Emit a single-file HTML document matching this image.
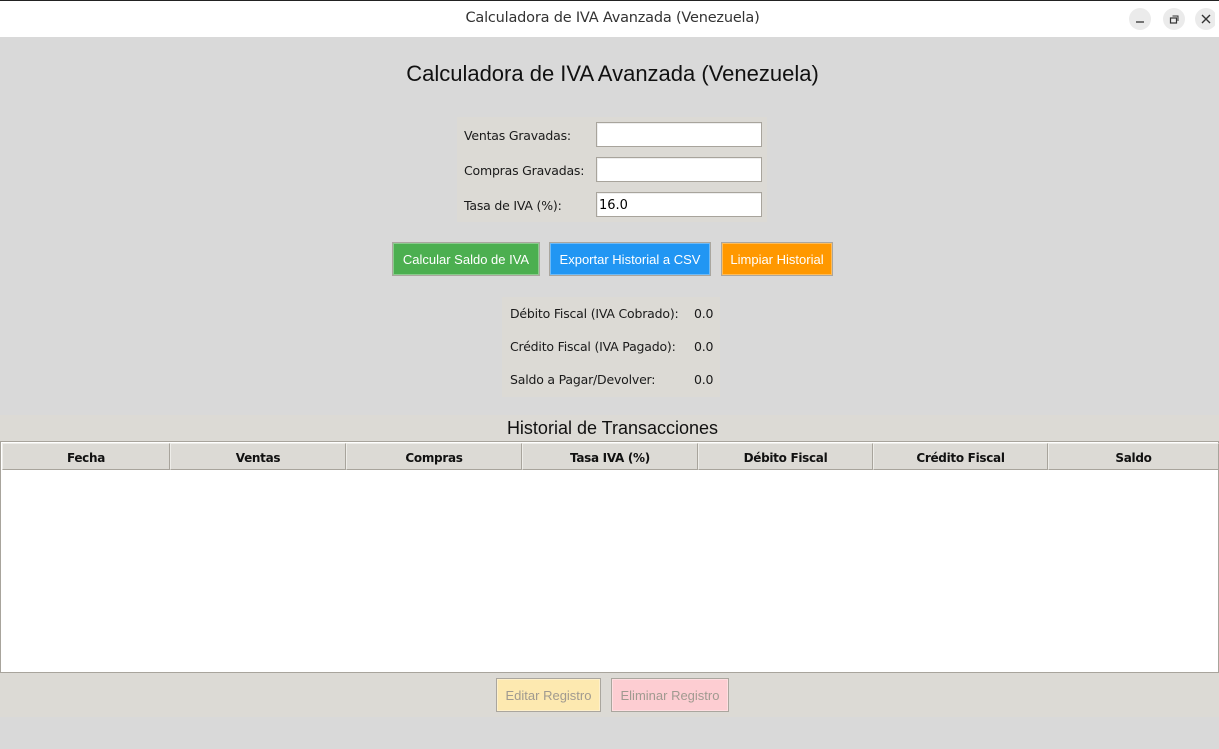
<!DOCTYPE html>
<html><head><meta charset="utf-8"><style>
*{margin:0;padding:0;box-sizing:border-box}
body{width:1219px;height:749px;background:#d9d9d9;position:relative;overflow:hidden;font-family:"DejaVu Sans","Liberation Sans",sans-serif}
.a{position:absolute}
.lbl{font-size:12.5px;color:#1a1a1a;letter-spacing:-0.2px}
.ent{background:#fff;border:1px solid #a8a49c;box-shadow:inset 1px 1px 0 #eee;font-size:13px;padding:5px 2px 0;color:#000}
.btn{font-family:"Liberation Sans",sans-serif;font-size:13px;color:#fff;display:flex;align-items:center;justify-content:center;border:1px solid #aaa69e;outline:1px solid rgba(255,255,255,0.35);outline-offset:-2px}
.th{top:443px;height:27px;background:#dcdad5;border:1px solid #a8a49c;border-top-color:#eeede9;border-left-color:#eeede9;font-weight:bold;font-size:12px;letter-spacing:-0.3px;color:#111;display:flex;align-items:center;justify-content:center;padding-top:3px}
</style></head><body>
<div class="a" style="left:0;top:0;width:1219px;height:37px;background:#fff;border-top:1px solid #222"></div>
<div class="a" style="left:0;top:10px;width:1225px;text-align:center;font-size:14.5px;color:#333;font-family:'DejaVu Sans',sans-serif;letter-spacing:-0.2px">Calculadora de IVA Avanzada (Venezuela)</div>
<svg class="a" style="left:1129px;top:8px" width="86" height="22">
<circle cx="11" cy="11" r="11" fill="#ebebeb"/><line x1="7" y1="14" x2="15" y2="14" stroke="#333" stroke-width="1.3"/>
<circle cx="45" cy="11" r="11" fill="#ebebeb"/><rect x="41.5" y="10" width="6" height="5" fill="none" stroke="#333" stroke-width="1.2"/><path d="M43.5 8h5.5v5" fill="none" stroke="#333" stroke-width="1"/>
<circle cx="77" cy="11" r="11" fill="#ebebeb"/><path d="M73 7l8 8M81 7l-8 8" stroke="#333" stroke-width="1.4"/>
</svg>
<div class="a" style="left:0;top:61px;width:1225px;text-align:center;font-family:'Liberation Sans',sans-serif;font-size:22px;color:#111">Calculadora de IVA Avanzada (Venezuela)</div>

<div class="a" style="left:457px;top:117px;width:310px;height:105px;background:#dcdad5"></div>
<div class="a lbl" style="left:464px;top:128px">Ventas Gravadas:</div>
<div class="a lbl" style="left:464px;top:163px">Compras Gravadas:</div>
<div class="a lbl" style="left:464px;top:198px">Tasa de IVA (%):</div>
<div class="a ent" style="left:596px;top:122px;width:166px;height:25px"></div>
<div class="a ent" style="left:596px;top:157px;width:166px;height:25px"></div>
<div class="a ent" style="left:596px;top:192px;width:166px;height:25px">16.0</div>

<div class="a btn" style="left:392px;top:242px;width:148px;height:34px;background:#4caf50">Calcular Saldo de IVA</div>
<div class="a btn" style="left:549px;top:242px;width:162px;height:34px;background:#2196f3">Exportar Historial a CSV</div>
<div class="a btn" style="left:721px;top:242px;width:112px;height:34px;background:#ff9800">Limpiar Historial</div>

<div class="a" style="left:502px;top:297px;width:218px;height:100px;background:#dcdad5"></div>
<div class="a lbl" style="left:510px;top:306px">Débito Fiscal (IVA Cobrado):</div>
<div class="a lbl" style="left:510px;top:339px">Crédito Fiscal (IVA Pagado):</div>
<div class="a lbl" style="left:510px;top:372px">Saldo a Pagar/Devolver:</div>
<div class="a lbl" style="left:694px;top:306px">0.0</div>
<div class="a lbl" style="left:694px;top:339px">0.0</div>
<div class="a lbl" style="left:694px;top:372px">0.0</div>

<div class="a" style="left:0;top:415px;width:1219px;height:302px;background:#dcdad5"></div>
<div class="a" style="left:0;top:418px;width:1225px;text-align:center;font-family:'Liberation Sans',sans-serif;font-size:18px;color:#111">Historial de Transacciones</div>
<div class="a" style="left:0;top:441px;width:1219px;height:232px;background:#fff;border:1px solid #a8a49c"></div>
<div class="a th" style="left:2px;width:168px">Fecha</div>
<div class="a th" style="left:170px;width:176px">Ventas</div>
<div class="a th" style="left:346px;width:176px">Compras</div>
<div class="a th" style="left:522px;width:176px">Tasa IVA (%)</div>
<div class="a th" style="left:698px;width:175px">Débito Fiscal</div>
<div class="a th" style="left:873px;width:175px">Crédito Fiscal</div>
<div class="a th" style="left:1048px;width:171px">Saldo</div>

<div class="a btn" style="left:496px;top:678px;width:105px;height:34px;background:#fde9b0;color:#a09a90">Editar Registro</div>
<div class="a btn" style="left:611px;top:678px;width:118px;height:34px;background:#fdcdd2;color:#a09a90">Eliminar Registro</div>
</body></html>
